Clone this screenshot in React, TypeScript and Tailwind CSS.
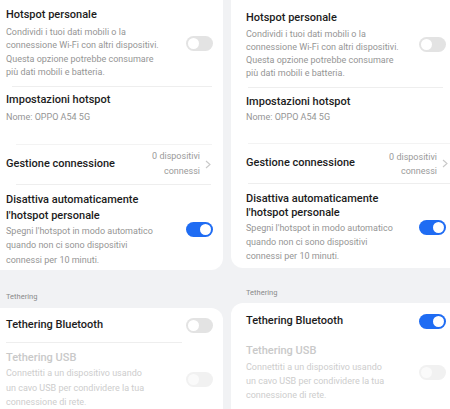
import React from "react";

function Toggle({ on = false, disabled = false }: { on?: boolean; disabled?: boolean }) {
  if (on) {
    return (
      <div className="w-[27px] h-[15px] rounded-full bg-[#1f6cf3] flex items-center justify-end px-[2px] shrink-0">
        <div className="w-[11px] h-[11px] rounded-full bg-white" />
      </div>
    );
  }
  if (disabled) {
    return (
      <div className="w-[27px] h-[15px] rounded-full bg-[#f1f1f1] flex items-center justify-start px-[2px] shrink-0">
        <div className="w-[11px] h-[11px] rounded-full bg-[#fafafa]" />
      </div>
    );
  }
  return (
    <div className="w-[27px] h-[15px] rounded-full bg-[#e3e3e3] flex items-center justify-start px-[2px] shrink-0">
      <div className="w-[11px] h-[11px] rounded-full bg-white" />
    </div>
  );
}

function Chevron() {
  return (
    <svg width="6" height="9" viewBox="0 0 6 9" className="shrink-0">
      <polyline points="1,1 5,4.5 1,8" fill="none" stroke="#c8c8c8" strokeWidth="1.1" />
    </svg>
  );
}

const title = "text-[11px] font-medium text-[#1c1c1c] whitespace-nowrap";
const desc = "text-[9px] text-[#959595] whitespace-nowrap";

export default function App() {
  return (
    <div className="w-[450px] h-[409px] overflow-hidden flex bg-[#f1f2f4] font-['Roboto','Noto_Sans',sans-serif]">
      {/* LEFT PANEL */}
      <div className="w-[223px] shrink-0 flex flex-col">
        <div className="h-[270px] shrink-0 bg-white rounded-br-[12px] flex flex-col">
          <div className="flex items-center pt-[7px] pb-[7px] pl-[6px] pr-[10px]">
            <div className="flex-1">
              <div className={`${title} leading-[16px]`}>Hotspot personale</div>
              <div className={`${desc} mt-[3px] leading-[13.3px]`}>
                Condividi i tuoi dati mobili o la
                <br />
                connessione Wi-Fi con altri dispositivi.
                <br />
                Questa opzione potrebbe consumare
                <br />
                più dati mobili e batteria.
              </div>
            </div>
            <Toggle />
          </div>
          <div className="h-px bg-[#eeeeee] ml-[12px] mr-[11px]" />
          <div className="pt-[5px] pb-[20px] pl-[6px]">
            <div className={`${title} leading-[16px]`}>Impostazioni hotspot</div>
            <div className={`${desc} mt-[2.5px] leading-[13px]`}>Nome: OPPO A54 5G</div>
          </div>
          <div className="h-px bg-[#f3f3f3] ml-[16px] mr-[11px]" />
          <div className="h-[39px] flex items-center pl-[6px] pr-[12px]">
            <div className={`${title} flex-1`}>Gestione connessione</div>
            <div className="text-[9px] leading-[15px] text-[#9a9a9a] text-right mr-[5px]">
              0 dispositivi
              <br />
              connessi
            </div>
            <Chevron />
          </div>
          <div className="h-px bg-[#eeeeee] ml-[16px] mr-[12px]" />
          <div className="flex items-center pt-[7px] pl-[6px] pr-[10px]">
            <div className="flex-1">
              <div className={`${title} leading-[16px]`}>
                Disattiva automaticamente
                <br />
                l'hotspot personale
              </div>
              <div className={`${desc} leading-[14.5px]`}>
                Spegni l'hotspot in modo automatico
                <br />
                quando non ci sono dispositivi
                <br />
                connessi per 10 minuti.
              </div>
            </div>
            <Toggle on />
          </div>
        </div>
        <div className="pt-[21px] pb-[5px] pl-[6px] text-[7.5px] leading-[12px] text-[#8a8a8a]">Tethering</div>
        <div className="flex-1 bg-white rounded-tr-[12px] flex flex-col">
          <div className="h-[34px] flex items-center pl-[6px] pr-[10px]">
            <div className={`${title} flex-1`}>Tethering Bluetooth</div>
            <Toggle />
          </div>
          <div className="h-px bg-[#eeeeee] ml-[6px] mr-[41px]" />
          <div className="flex items-center pt-[7px] pl-[6px] pr-[10px]">
            <div className="flex-1">
              <div className="text-[11px] font-medium text-[#c9c9c9] leading-[16px] whitespace-nowrap">Tethering USB</div>
              <div className="text-[9px] text-[#cdcdcd] leading-[14.5px] whitespace-nowrap">
                Connettiti a un dispositivo usando
                <br />
                un cavo USB per condividere la tua
                <br />
                connessione di rete.
              </div>
            </div>
            <Toggle disabled />
          </div>
        </div>
      </div>

      {/* RIGHT PANEL */}
      <div className="flex-1 ml-[8px] flex flex-col">
        <div className="h-[268px] shrink-0 bg-white rounded-bl-[12px] flex flex-col">
          <div className="flex items-center pt-[9.5px] pb-[7.5px] pl-[15px] pr-[4px]">
            <div className="flex-1">
              <div className={`${title} leading-[16px]`}>Hotspot personale</div>
              <div className={`${desc} mt-[2px] leading-[13px]`}>
                Condividi i tuoi dati mobili o la
                <br />
                connessione Wi-Fi con altri dispositivi.
                <br />
                Questa opzione potrebbe consumare
                <br />
                più dati mobili e batteria.
              </div>
            </div>
            <Toggle />
          </div>
          <div className="h-px bg-[#eeeeee] ml-[17px] mr-[7px]" />
          <div className="pt-[6px] pb-[19px] pl-[15px]">
            <div className={`${title} leading-[16px]`}>Impostazioni hotspot</div>
            <div className={`${desc} mt-[1px] leading-[13px]`}>Nome: OPPO A54 5G</div>
          </div>
          <div className="h-px bg-[#f3f3f3] ml-[17px]" />
          <div className="h-[39px] flex items-center pl-[15px] pr-[2px]">
            <div className={`${title} flex-1`}>Gestione connessione</div>
            <div className="text-[9px] leading-[14px] text-[#9a9a9a] text-right mr-[5px]">
              0 dispositivi
              <br />
              connessi
            </div>
            <Chevron />
          </div>
          <div className="h-px bg-[#eeeeee] ml-[17px]" />
          <div className="flex items-center pt-[8px] pl-[15px] pr-[4px]">
            <div className="flex-1">
              <div className={`${title} leading-[14px]`}>
                Disattiva automaticamente
                <br />
                l'hotspot personale
              </div>
              <div className={`${desc} mt-[1px] leading-[14px]`}>
                Spegni l'hotspot in modo automatico
                <br />
                quando non ci sono dispositivi
                <br />
                connessi per 10 minuti.
              </div>
            </div>
            <Toggle on />
          </div>
        </div>
        <div className="pt-[19px] pb-[4px] pl-[15px] text-[7.5px] leading-[12px] text-[#8a8a8a]">Tethering</div>
        <div className="flex-1 bg-white rounded-tl-[12px] flex flex-col">
          <div className="h-[36px] flex items-center pl-[15px] pr-[4px]">
            <div className={`${title} flex-1`}>Tethering Bluetooth</div>
            <Toggle on />
          </div>
          <div className="flex items-center pt-[4px] pl-[15px] pr-[4px]">
            <div className="flex-1">
              <div className="text-[11px] font-medium text-[#c9c9c9] leading-[16px] whitespace-nowrap">Tethering USB</div>
              <div className="text-[9px] text-[#cdcdcd] mt-[1px] leading-[14px] whitespace-nowrap">
                Connettiti a un dispositivo usando
                <br />
                un cavo USB per condividere la tua
                <br />
                connessione di rete.
              </div>
            </div>
            <Toggle disabled />
          </div>
        </div>
      </div>
    </div>
  );
}
